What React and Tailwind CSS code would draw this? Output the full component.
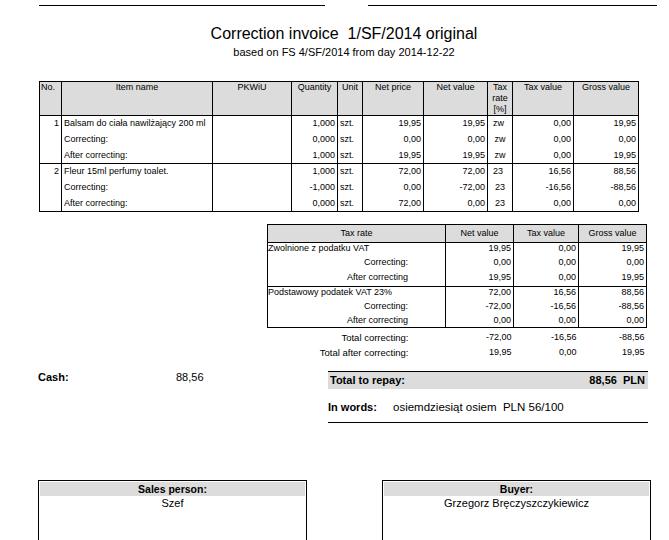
import React from "react";

const cols = [22, 151, 79, 46, 25, 61, 64, 25, 61, 65];

const groups = [
  [
    ["1", "Balsam do ciała nawilżający 200 ml", "", "1,000", "szt.", "19,95", "19,95", "zw", "0,00", "19,95"],
    ["", "Correcting:", "", "0,000", "szt.", "0,00", "0,00", "zw", "0,00", "0,00"],
    ["", "After correcting:", "", "1,000", "szt.", "19,95", "19,95", "zw", "0,00", "19,95"],
  ],
  [
    ["2", "Fleur 15ml perfumy toalet.", "", "1,000", "szt.", "72,00", "72,00", "23", "16,56", "88,56"],
    ["", "Correcting:", "", "-1,000", "szt.", "0,00", "-72,00", "23", "-16,56", "-88,56"],
    ["", "After correcting:", "", "0,000", "szt.", "72,00", "0,00", "23", "0,00", "0,00"],
  ],
];

const align = ["text-right", "text-left", "text-left", "text-right", "text-left", "text-right", "text-right", "text-center", "text-right", "text-right"];

const taxGroups = [
  {
    h: ["h-[14px]", "h-[15px]", "h-[15px]"],
    rows: [
      ["Zwolnione z podatku VAT", "19,95", "0,00", "19,95", "left"],
      ["Correcting:", "0,00", "0,00", "0,00", "right"],
      ["After correcting", "19,95", "0,00", "19,95", "right"],
    ],
  },
  {
    h: ["h-[14px]", "h-[14px]", "h-[13px]"],
    rows: [
      ["Podstawowy podatek VAT 23%", "72,00", "16,56", "88,56", "left"],
      ["Correcting:", "-72,00", "-16,56", "-88,56", "right"],
      ["After correcting", "0,00", "0,00", "0,00", "right"],
    ],
  },
];

export default function App() {
  return (
    <div
      className="relative w-[669px] h-[540px] overflow-hidden bg-white text-black"
      style={{ fontFamily: '"Liberation Sans", Arial, sans-serif' }}
    >
      {/* top lines */}
      <div className="flex pt-[5px] pl-[39px] gap-[43px]">
        <div className="w-[286px] border-t border-black" />
        <div className="w-[289px] border-t border-black" />
      </div>

      {/* title */}
      <div className="ml-[39px] w-[610px] text-center mt-[19px]">
        <div className="text-[16px] leading-[18px] whitespace-pre">Correction invoice  1/SF/2014 original</div>
        <div className="text-[11px] leading-[14px] mt-[2px]">based on FS 4/SF/2014 from day 2014-12-22</div>
      </div>

      {/* main table */}
      <table className="ml-[39px] mt-[22px] border-collapse table-fixed text-[9px] leading-[11px]" style={{ width: 600 }}>
        <colgroup>
          {cols.map((w, i) => (
            <col key={i} style={{ width: w }} />
          ))}
        </colgroup>
        <thead>
          <tr className="bg-[#dcdcdc] h-[33px]">
            {["No.", "Item name", "PKWiU", "Quantity", "Unit", "Net price", "Net value", "Tax rate [%]", "Tax value", "Gross value"].map((h, i) => (
              <th
                key={i}
                className={`border border-black align-top font-normal p-0 px-[1px] ${i === 0 ? "text-left" : "text-center"}`}
              >
                {i === 7 ? (
                  <span>
                    Tax
                    <br />
                    rate
                    <br />
                    [%]
                  </span>
                ) : (
                  h
                )}
              </th>
            ))}
          </tr>
        </thead>
        {groups.map((g, gi) => (
          <tbody key={gi} className="border border-black">
            {g.map((r, ri) => (
              <tr key={ri} className="h-[16px]">
                {r.map((c, ci) => (
                  <td
                    key={ci}
                    className={`border-x border-black px-[2px] py-0 whitespace-nowrap overflow-hidden ${
                      ci === 7 && ri === 0 ? "text-left pl-[5px]" : align[ci]
                    }`}
                  >
                    {c}
                  </td>
                ))}
              </tr>
            ))}
          </tbody>
        ))}
      </table>

      {/* tax summary */}
      <table className="ml-[267px] mt-[12px] border-collapse table-fixed text-[9px] leading-[11px]" style={{ width: 379 }}>
        <colgroup>
          <col style={{ width: 178 }} />
          <col style={{ width: 68 }} />
          <col style={{ width: 65 }} />
          <col style={{ width: 68 }} />
        </colgroup>
        <thead>
          <tr className="bg-[#dcdcdc] h-[18px]">
            {["Tax rate", "Net value", "Tax value", "Gross value"].map((h) => (
              <th key={h} className="border border-black font-normal text-center p-0">
                {h}
              </th>
            ))}
          </tr>
        </thead>
        {taxGroups.map((g, gi) => (
          <tbody key={gi} className="border border-black">
            {g.rows.map((r, ri) => (
              <tr key={ri} className={g.h[ri]}>
                <td className={`border-x border-black p-0 align-top whitespace-nowrap ${r[4] === "left" ? "text-left" : "text-right pr-[37px]"}`}>{r[0]}</td>
                <td className="border-x border-black p-0 align-top text-right pr-[2px]">{r[1]}</td>
                <td className="border-x border-black p-0 align-top text-right pr-[2px]">{r[2]}</td>
                <td className="border-x border-black p-0 align-top text-right pr-[2px]">{r[3]}</td>
              </tr>
            ))}
          </tbody>
        ))}
        <tbody>
          {[
            ["Total correcting:", "-72,00", "-16,56", "-88,56", "h-[15px]"],
            ["Total after correcting:", "19,95", "0,00", "19,95", "h-[15px]"],
          ].map((r, i) => (
            <tr key={i} className={r[4]}>
              <td className="p-0 align-bottom text-right pr-[37px] text-[9.5px]">{r[0]}</td>
              <td className="p-0 align-bottom text-right pr-[2px]">{r[1]}</td>
              <td className="p-0 align-bottom text-right pr-[2px]">{r[2]}</td>
              <td className="p-0 align-bottom text-right pr-[2px]">{r[3]}</td>
            </tr>
          ))}
        </tbody>
      </table>

      {/* totals */}
      <div className="flex mt-[13px] text-[11px] leading-[14px]">
        <div className="ml-[38px] w-[290px] flex -mt-[1px]">
          <span className="font-bold w-[138px]">Cash:</span>
          <span>88,56</span>
        </div>
        <div className="w-[320px]">
          <div className="border-t border-black bg-[#dcdcdc] h-[18px] flex items-center justify-between px-[2px] font-bold">
            <span>Total to repay:</span>
            <span className="whitespace-pre pr-[1px]">88,56  PLN</span>
          </div>
          <div className="flex items-start pt-[11px] h-[34px] border-b border-black">
            <span className="font-bold w-[65px]">In words:</span>
            <span className="whitespace-pre text-[11.5px]">osiemdziesiąt osiem  PLN 56/100</span>
          </div>
        </div>
      </div>

      {/* signatures */}
      <div className="flex mt-[57px] ml-[38px] gap-[75px] text-[11px] leading-[14px]">
        <div className="w-[269px] h-[80px] border border-black">
          <div className="bg-[#dcdcdc] mx-[1px] mt-[1px] h-[14px] flex items-center justify-center font-bold text-[10.5px]">Sales person:</div>
          <div className="text-center">Szef</div>
        </div>
        <div className="w-[269px] h-[80px] border border-black">
          <div className="bg-[#dcdcdc] mx-[1px] mt-[1px] h-[14px] flex items-center justify-center font-bold text-[10.5px]">Buyer:</div>
          <div className="text-center">Grzegorz Bręczyszczykiewicz</div>
        </div>
      </div>
    </div>
  );
}
